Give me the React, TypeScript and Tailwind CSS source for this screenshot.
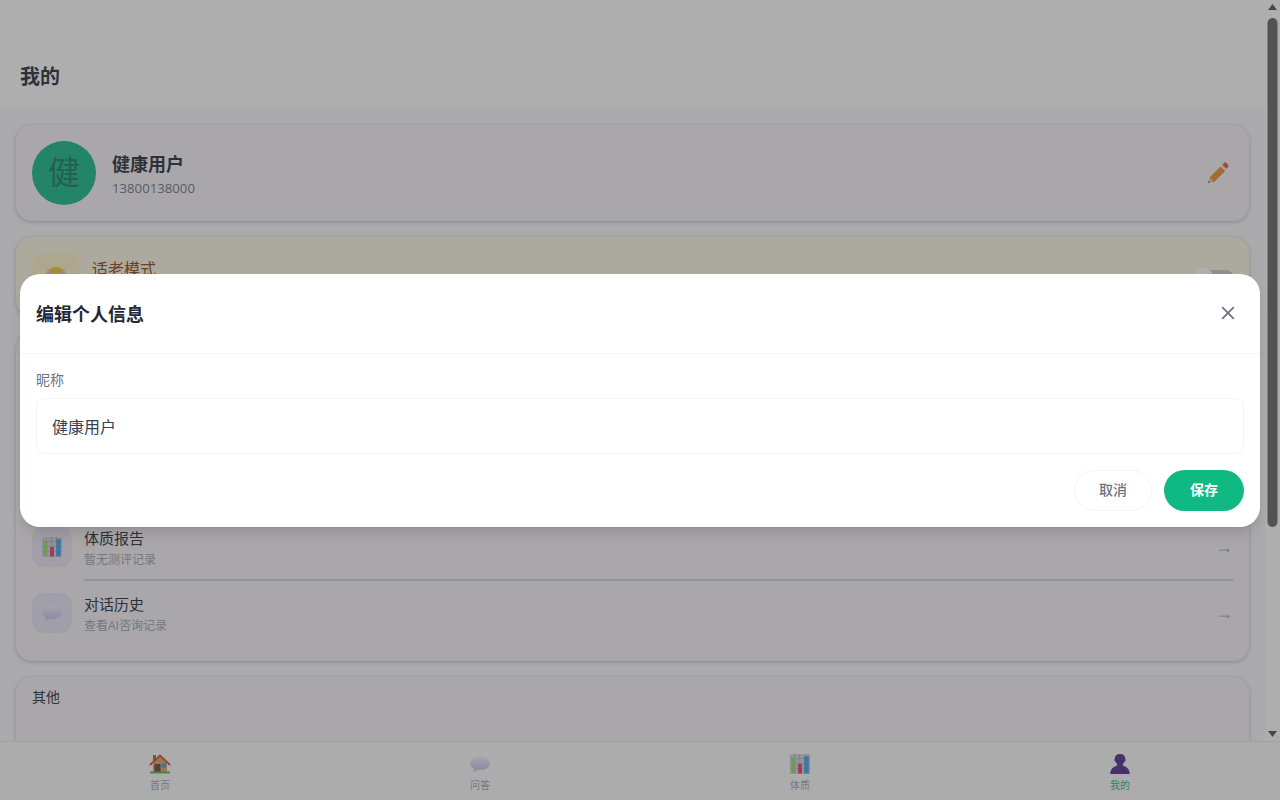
const font = "font-['Open_Sans','Noto_Sans_CJK_SC',sans-serif]";

function House() {
  return (
    <svg width="22" height="22" viewBox="0 0 22 22">
      <rect x="4" y="2" width="3" height="6" fill="#a5673f" />
      <path d="M4 10 11 3.500 18 10v9H4z" fill="#d9a066" />
      <path d="M1.500 11.500 11 2.500l9.500 9" fill="none" stroke="#e0452c" strokeWidth="1.800" strokeLinecap="round" strokeLinejoin="round" />
      <rect x="5.500" y="11" width="6" height="8" fill="#6d4035" />
      <rect x="13" y="10.500" width="4" height="4" fill="#2ea6e8" />
      <rect x="1" y="18.500" width="20" height="2" fill="#59b84f" />
    </svg>
  );
}

function Chart({ size = 20 }: { size?: number }) {
  return (
    <svg width={size} height={size} viewBox="0 0 20 20">
      <rect x="0" y="0" width="20" height="20" rx="1.500" fill="#d3d0d8" />
      <path d="M0 4.500h20M0 9.500h20M0 14.500h20M4.500 0v20M9.500 0v20M14.500 0v20" stroke="#a8a6ad" strokeWidth=".6" />
      <rect x="1.500" y="4" width="4" height="15" rx=".8" fill="#8fdc72" />
      <rect x="8" y="10" width="4" height="9.500" fill="#e83a7c" />
      <rect x="14.200" y="2" width="4.600" height="17.500" rx=".8" fill="#3fa1ec" />
    </svg>
  );
}

function Bubble({ size = 20 }: { size?: number }) {
  return (
    <svg width={size} height={size} viewBox="0 0 20 20">
      <defs>
        <linearGradient id="bubbleFill" x1="0" y1="0" x2="0" y2="1">
          <stop offset="0" stopColor="#f4f0fb" />
          <stop offset="1" stopColor="#c9b6ea" />
        </linearGradient>
      </defs>
      <path d="M10 2.500c5.300 0 10 2.800 10 6.800s-4.500 6.800-10 6.800c-1 0-2-.1-2.900-.3C6 17 4.500 17.800 3 18c.8-1 1.200-2 1.200-3.300C1.500 13.500 0 11.600 0 9.300 0 5.300 4.700 2.500 10 2.500z" fill="url(#bubbleFill)" />
    </svg>
  );
}

function Person() {
  return (
    <svg width="20" height="20" viewBox="0 0 20 20">
      <path d="M10 0c3.400 0 5.200 2 5.200 4.500 0 .5.600.7.500 1.600-.1.800-.6 1.200-1.100 1.400-.4 1.200-1 2.100-1.800 2.700v1.300c1.500.5 6.700 2 7 8.500H.2c.3-6.500 5.500-8 7-8.500v-1.300c-.8-.6-1.400-1.500-1.800-2.700-.5-.2-1-.6-1.100-1.400-.1-.9.500-1.100.5-1.600C4.800 2 6.600 0 10 0z" fill="#4a2a8c" />
    </svg>
  );
}

function Pencil() {
  return (
    <svg width="24" height="24" viewBox="0 0 24 24">
      <path d="M17.500 6.500 20 9 8.500 20.500 6 18z" fill="#e07b1e" />
      <path d="M15.500 4.500 19.500 8.500 8.500 19.500 4.500 15.500z" fill="#f08c28" />
      <path d="M4.500 15.500 8.500 19.500 3 21z" fill="#e8c9a0" />
      <path d="M3.800 19 5 20.200 3 21z" fill="#5b2a6e" />
      <path d="M15.500 4.500 17.500 2.500 21.500 6.500 19.500 8.500z" fill="#dfe3ee" />
      <path d="M17.300 2.700 19 1c.6-.6 1.600-.6 2.200 0l1.800 1.800c.6.600.6 1.600 0 2.200l-1.700 1.700z" fill="#ee4f3c" />
    </svg>
  );
}

function Elder() {
  return (
    <svg width="28" height="28" viewBox="0 0 28 28">
      <circle cx="14" cy="15" r="11" fill="#f5c53a" />
      <path d="M3 15a11 11 0 0 1 4-8l2 3a8 8 0 0 0-3 6z" fill="#c9c9d2" />
      <path d="M25 15a11 11 0 0 0-4-8l-2 3a8 8 0 0 1 3 6z" fill="#c9c9d2" />
    </svg>
  );
}

function Row({ icon, bg, title, sub, divider }: { icon: React.ReactNode; bg: string; title: string; sub: string; divider?: boolean }) {
  return (
    <div className={`flex items-center ${divider ? "h-[66px] pb-0.5" : "h-16"} relative`}>
      <div className={`w-10 h-10 rounded-xl flex items-center justify-center shrink-0 ${bg}`}>{icon}</div>
      <div className="ml-3 flex-1 pt-[2px]">
        <div className="text-[15px] leading-[22px] text-[#1f2937]">{title}</div>
        <div className="text-xs leading-[18px] mt-0.5 text-[#9ca3af]">{sub}</div>
      </div>
      <div className="text-lg leading-none text-[#9ca3af] font-['Liberation_Sans',sans-serif]">→</div>
      {divider && <div className="absolute left-[52px] right-0 bottom-0 h-0.5 bg-[#d1d5db]" />}
    </div>
  );
}

function Tab({ icon, label, active }: { icon: React.ReactNode; label: string; active?: boolean }) {
  return (
    <div className="flex-1 flex flex-col items-center pt-[11px]">
      <div className="h-[22px] flex items-center justify-center">{icon}</div>
      <div className={`text-[10px] leading-[15px] mt-[3px] ${active ? "text-[#10b981]" : "text-[#9ca3af]"}`}>{label}</div>
    </div>
  );
}

const cardShadow = "shadow-[0_1px_4px_rgba(0,0,0,0.22)]";

export default function App() {
  return (
    <div className={`relative w-full h-[800px] overflow-hidden bg-white ${font}`}>
      <div className="h-[741px] flex">
        <div className="flex-1 min-w-0 overflow-hidden bg-[#f8f8fc]">
          <header className="h-[109px] bg-white flex items-end px-5 pb-[17px]">
            <h1 className="text-xl font-semibold text-[#1f2937] leading-[30px]">我的</h1>
          </header>
          <main className="p-4 flex flex-col gap-4">
            <section className={`h-24 rounded-2xl bg-[#f7f3f8] ${cardShadow} flex items-center px-4`}>
              <div className="w-16 h-16 rounded-full bg-[#10b981] flex items-center justify-center text-[32px] leading-none pb-[2px] text-[#147765]">健</div>
              <div className="ml-4 flex-1 pt-[3px]">
                <div className="text-lg leading-[26px] font-semibold text-[#1f2937]">健康用户</div>
                <div className="text-[13.2px] leading-[20px] mt-[1px] text-[#6b7280]">13800138000</div>
              </div>
              <div className="mr-1 mt-[2px]"><Pencil /></div>
            </section>
            <section className={`h-20 rounded-2xl bg-[#fcf6e4] ${cardShadow} flex items-center px-4`}>
              <div className="w-12 h-12 rounded-xl bg-[#fef3c7] flex items-center justify-center"><Elder /></div>
              <div className="ml-3 flex-1">
                <div className="text-base text-[#92400e]">适老模式</div>
                <div className="text-xs text-[#b45309]">放大字体，简化操作</div>
              </div>
              <div className="w-10 h-3.5 rounded-full bg-[#c8cad0] relative">
                <div className="absolute left-0 -top-[3px] w-5 h-5 rounded-full bg-white shadow" />
              </div>
            </section>
            <section className={`h-[328px] rounded-2xl bg-[#f7f3f8] ${cardShadow} px-4 pt-4`}>
              <div className="text-sm leading-[21px] text-[#1f2937] mb-[13px]">健康管理</div>
              <Row icon={<Chart />} bg="bg-[#dbeafe]" title="健康档案" sub="查看健康信息" divider />
              <Row icon={<Chart />} bg="bg-[#d1fae5]" title="健康计划" sub="查看每日计划" divider />
              <Row icon={<Chart />} bg="bg-[#ece4f3]" title="体质报告" sub="暂无测评记录" divider />
              <Row icon={<Bubble />} bg="bg-[#e6e6f6]" title="对话历史" sub="查看AI咨询记录" />
            </section>
            <section className={`h-[300px] rounded-2xl bg-[#f7f3f8] ${cardShadow} px-4 pt-[9px]`}>
              <div className="text-sm leading-[21px] text-[#1f2937]">其他</div>
            </section>
          </main>
        </div>
        <div className="w-[15px] bg-white flex flex-col items-center">
          <svg className="mt-[4px] shrink-0" width="9" height="6" viewBox="0 0 9 6"><path d="M4.500 0 9 6H0z" fill="#505050" /></svg>
          <div className="mt-[8px] w-[10px] -translate-x-[0.5px] h-[509px] rounded-[5px] bg-[#636363]" />
          <svg className="mt-auto mb-[4px] shrink-0" width="9" height="6" viewBox="0 0 9 6"><path d="M4.500 6 9 0H0z" fill="#505050" /></svg>
        </div>
      </div>
      <nav className="h-[59px] bg-[#fcfcfc] border-t border-[#e5e7eb] flex">
        <Tab icon={<House />} label="首页" />
        <Tab icon={<Bubble />} label="问答" />
        <Tab icon={<Chart />} label="体质" />
        <Tab icon={<Person />} label="我的" active />
      </nav>
      <div className="absolute inset-0 bg-[rgba(62,62,62,0.42)] flex items-center justify-center px-5">
        <div className="w-full h-[253px] bg-white rounded-[20px] shadow-lg">
          <div className="h-20 border-b border-[#f3f4f6] flex items-center justify-between pl-4 pr-5">
            <h2 className="text-lg font-bold text-[#1f2937] pt-[2px]">编辑个人信息</h2>
            <svg width="24" height="24" viewBox="0 0 24 24" fill="none" stroke="#6b7280" strokeWidth="1.800"><path d="M17.800 6.200 6.200 17.800M6.200 6.200l11.600 11.600" /></svg>
          </div>
          <div className="px-4 pt-[15px]">
            <div className="text-sm leading-[21px] text-[#6b7280] mb-2">昵称</div>
            <div className="h-14 border border-[#f3f4f6] rounded-lg flex items-center pl-[15px] pt-[2px] text-base text-[#374151]">健康用户</div>
            <div className="mt-4 flex justify-end gap-3">
              <button className="w-[78px] h-[41px] rounded-full border border-[#f3f4f6] text-sm font-medium text-[#6b7280]">取消</button>
              <button className="w-20 h-[41px] rounded-full bg-[#10b981] text-sm font-bold text-white">保存</button>
            </div>
          </div>
        </div>
      </div>
    </div>
  );
}
